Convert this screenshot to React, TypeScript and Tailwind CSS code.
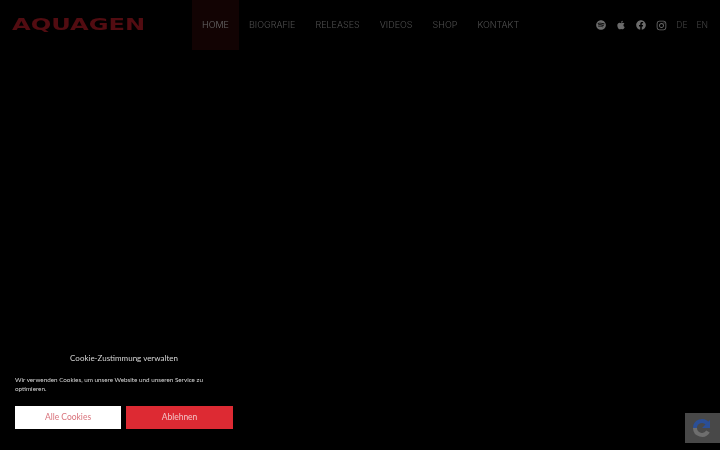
import { FaApple, FaFacebook, FaInstagram, FaSpotify } from "react-icons/fa";

const NAV_ITEMS = ["HOME", "BIOGRAFIE", "RELEASES", "VIDEOS", "SHOP", "KONTAKT"];

export default function App() {
  return (
    <div className="relative h-screen overflow-hidden bg-black font-['Lato','Liberation_Sans',sans-serif] blur-[0.35px]">
      <header className="flex h-[50px] items-center">
        <div className="ml-3 flex w-[180px] items-center">
          <span className="origin-left scale-x-[1.61] font-['DejaVu_Sans',sans-serif] text-[15px] font-bold leading-none text-[#520c11]">
            AQUAGEN
          </span>
        </div>
        <nav className="flex h-full font-['Inter',sans-serif] font-light">
          {NAV_ITEMS.map((item, i) => (
            <a
              key={item}
              className={`flex h-full items-center px-[10px] text-[9px] ${i === 0 ? "bg-[#120303] text-[#6a6a6a]" : "text-[#505050]"}`}
            >
              {item}
            </a>
          ))}
        </nav>
        <div className="ml-auto flex items-center pr-3 text-[#6b6b6b]">
          <div className="flex items-center gap-[10px]">
            <FaSpotify className="size-[10px]" />
            <FaApple className="size-[10px]" />
            <FaFacebook className="size-[10px]" />
            <FaInstagram className="size-[11px]" />
          </div>
          <div className="ml-[9px] flex gap-[9px] font-['Inter',sans-serif] text-[8.5px] font-light text-[#444]">
            <span>DE</span>
            <span>EN</span>
          </div>
        </div>
      </header>

      <div className="absolute bottom-0 left-0 w-[248px] px-[15px] pb-[21px] text-[#d8d8d8]">
        <p className="text-center text-[8px] leading-[12px]">Cookie-Zustimmung verwalten</p>
        <p className="mt-[11px] text-[6.3px] leading-[9px]">
          Wir verwenden Cookies, um unsere Website und unseren Service zu optimieren.
        </p>
        <div className="mt-[13px] flex gap-[5px]">
          <button className="h-[23px] w-[106px] bg-white text-[8.5px] text-[#d9737c]">Alle Cookies</button>
          <button className="h-[23px] w-[107px] bg-[#dd2a33] text-[8.5px] text-[#f2c4c6]">Ablehnen</button>
        </div>
      </div>

      <div className="absolute bottom-[7px] right-0 flex h-[30px] w-[35px] items-center bg-[#484848] pl-[7px]">
        <svg viewBox="0 0 20 20" className="size-[20px]" fill="none">
          <path d="M3 10a7 7 0 0 1 12.500-4.300" stroke="#2b4f96" strokeWidth="4" />
          <path d="M18 2v8h-8z" fill="#2b4f96" />
          <path d="M3 10a7 7 0 0 0 13 3.500" stroke="#6e6e6e" strokeWidth="4" />
        </svg>
      </div>
    </div>
  );
}
